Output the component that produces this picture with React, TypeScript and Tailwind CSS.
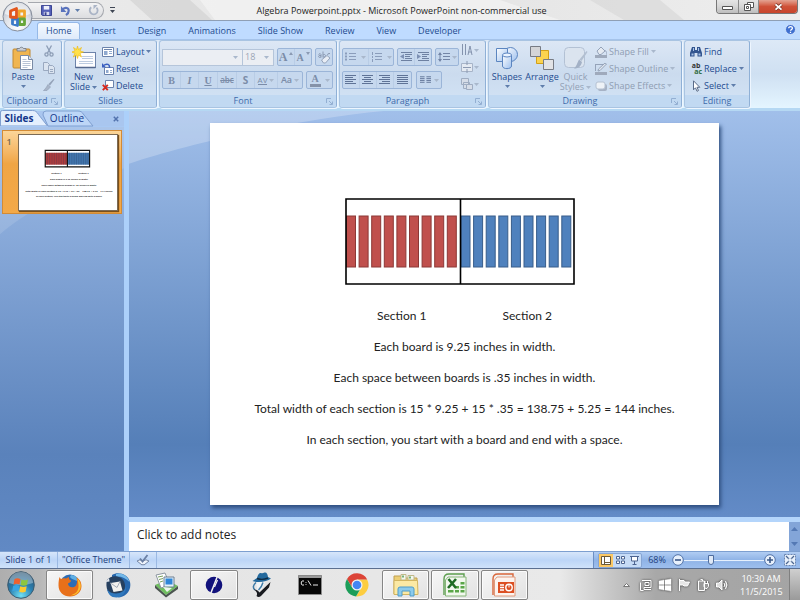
import type { ReactNode } from "react";
import clsx from "clsx";

const RIBBON_TABS = ["Home", "Insert", "Design", "Animations", "Slide Show", "Review", "View", "Developer"];

const SLIDE_LINES = [
  "Each board is 9.25 inches in width.",
  "Each space between boards is .35 inches in width.",
  "Total width of each section is 15 * 9.25 + 15 * .35 = 138.75 + 5.25 = 144 inches.",
  "In each section, you start with a board and end with a space.",
];

const BOARDS = [0, 1, 2, 3, 4, 5, 6, 7, 8];

function Caret({ muted }: { muted?: boolean }) {
  return (
    <svg viewBox="0 0 5 3" className={clsx("h-[3px] w-[5px] shrink-0", muted ? "fill-[#a9b8cc]" : "fill-[#5f7dab]")}>
      <path d="M0 0h5L2.5 3z" />
    </svg>
  );
}

/* ---------- title bar ---------- */

function OfficeOrb() {
  return (
    <button aria-label="Office Button" className="absolute top-[1px] left-[2px] z-10 size-[31px]">
      <svg viewBox="0 0 31 31" className="size-full">
        <defs>
          <radialGradient id="orb" cx=".5" cy=".85" r=".8">
            <stop offset="0" stopColor="#fff" />
            <stop offset=".55" stopColor="#dfe2e8" />
            <stop offset="1" stopColor="#b4bac6" />
          </radialGradient>
        </defs>
        <circle cx="15.500" cy="15.500" r="14.500" fill="url(#orb)" stroke="#858d9b" />
        <path d="M3 13a12.500 11.500 0 0 1 25 0c-7 3-18 3-25 0z" fill="#fff" opacity=".6" />
        <g fill="none" strokeWidth="2.800" strokeLinejoin="round">
          <path d="M17 10h5.500v6H17z" stroke="#f0a52c" />
          <path d="M17.500 18h5v5.500h-5z" stroke="#67a63a" />
          <path d="M10.500 18h5v6.500l-5-1.500z" stroke="#3c7bc8" />
          <path d="M8.500 10 14.500 7.500v9l-6-.5z" stroke="#e2571e" />
        </g>
      </svg>
    </button>
  );
}

function TitleBar() {
  return (
    <header className="relative flex h-5 shrink-0 items-center bg-linear-to-r from-[#ececec] via-[#e3e3e3] to-[#eeeeee]">
      <svg viewBox="0 0 800 20" preserveAspectRatio="none" className="absolute inset-0 size-full">
        <path d="M130 0h60l22 20h-60z" fill="#d3d3d3" opacity=".7" />
        <path d="M200 0h300l60 20H215z" fill="#f3f3f3" opacity=".8" />
        <path d="M590 0h70l24 20h-60z" fill="#d9d9d9" opacity=".7" />
      </svg>
      <div className="relative ml-[28px] flex h-[17px] w-[76px] items-center gap-2 rounded-r-full border border-l-0 border-[#a5a8ae] bg-linear-to-b from-[#f4f4f5] to-[#dcdde0] pl-[13px]">
        <button aria-label="Save">
          <svg viewBox="0 0 12 12" className="size-[11px]">
            <path d="M.5.5h11v11h-10l-1-1z" fill="#5560b8" stroke="#303a8c" />
            <path d="M3 1h6v4H3z" fill="#eef0fb" />
            <path d="M3 7.500h6V11H3z" fill="#d7daf0" />
            <path d="M4 8h2v3H4z" fill="#39428f" />
          </svg>
        </button>
        <button aria-label="Undo" className="flex items-center gap-1">
          <svg viewBox="0 0 12 12" className="size-[11px]">
            <path d="M3 4.500C6 2 9.500 3 9.500 6.200 9.500 8.500 8 10 6.500 11" fill="none" stroke="#5a73bd" strokeWidth="2.400" />
            <path d="M1 1v6.500h6z" fill="#5a73bd" />
          </svg>
          <Caret />
        </button>
        <button aria-label="Repeat" disabled>
          <svg viewBox="0 0 12 12" className="size-[11px]">
            <path d="M3.500 2.500C1 4.500 1.500 8 4 9.500s6.500.5 6.500-3.500c0-1.200-.5-2.500-1.300-3.200" fill="none" stroke="#aab4c6" strokeWidth="2" />
            <path d="M6 4.500V0H10.500z" fill="#aab4c6" />
          </svg>
        </button>
      </div>
      <button aria-label="Customize Quick Access Toolbar" className="relative ml-[6px]">
        <svg viewBox="0 0 5 6" className="h-[6px] w-[5px] fill-[#3f4654]">
          <path d="M0 0h5v1H0zM0 3h5L2.500 6z" />
        </svg>
      </button>
      <h1 className="relative flex-1 pt-[1px] pr-[28px] text-center text-[9px] leading-5 text-[#1c1c1c]">
        Algebra Powerpoint.pptx - Microsoft PowerPoint non-commercial use
      </h1>
      <div className="relative mr-[2px] flex h-[14px] self-start overflow-hidden rounded-b-[4px] border border-t-0 border-[#777]">
        <button aria-label="Minimize" className="flex w-[22px] items-center justify-center border-r border-[#8b8b8b] bg-linear-to-b from-[#e6e6e6] via-[#d6d6d6] to-[#bdbdbd]">
          <svg viewBox="0 0 11 4" className="mt-[2px] h-[4px] w-[11px]">
            <path d="M.5.5h10v3H.5z" fill="#fff" stroke="#555" />
          </svg>
        </button>
        <button aria-label="Restore Down" className="flex w-[20px] items-center justify-center border-r border-[#8b8b8b] bg-linear-to-b from-[#e6e6e6] via-[#d6d6d6] to-[#bdbdbd]">
          <svg viewBox="0 0 10 9" className="h-[9px] w-[10px]" fill="#fff" stroke="#555">
            <path d="M3.500.5h6v5h-6z" />
            <path d="M.5 2.500h6v6h-6z" />
            <path d="M2.500 4.500h2v2h-2z" />
          </svg>
        </button>
        <button aria-label="Close" className="flex w-[38px] items-center justify-center bg-linear-to-b from-[#e3a392] via-[#cf5138] to-[#c8452c]">
          <svg viewBox="0 0 9 8" className="h-[8px] w-[9px]">
            <path d="M1.500 1.300 7.500 6.700M7.500 1.300 1.500 6.700" stroke="#7c3528" strokeWidth="3.200" />
            <path d="M1.500 1.300 7.500 6.700M7.500 1.300 1.500 6.700" stroke="#fff" strokeWidth="1.800" />
          </svg>
        </button>
      </div>
    </header>
  );
}

function TabRow() {
  return (
    <nav className="flex h-[19px] shrink-0 items-end border-t border-[#8f9fb5] bg-[#bfdbff] pl-[37px]">
      {RIBBON_TABS.map((tab, i) => (
        <button
          key={tab}
          className={clsx(
            "h-[17px] text-[9px] leading-[16px] text-[#1e4b8f]",
            i === 0 ? "rounded-t-[3px] border border-b-0 border-[#95b9e8] bg-linear-to-b from-[#f5faff] to-[#dfeafa] px-[8px]" : "px-[11px]",
          )}
        >
          {tab}
        </button>
      ))}
      <button aria-label="Help" className="mr-[4px] mb-[4px] ml-auto">
        <svg viewBox="0 0 11 11" className="size-[11px]">
          <circle cx="5.500" cy="5.500" r="5" fill="#3f6fd0" stroke="#cfe0f8" />
          <path d="M3.700 4.300c0-2.300 3.700-2.300 3.700 0 0 1.300-1.800 1.200-1.800 2.500M5.500 7.800v1.200" fill="none" stroke="#fff" strokeWidth="1.300" />
        </svg>
      </button>
    </nav>
  );
}

/* ---------- ribbon ---------- */

function Group({
  label,
  width,
  launcher,
  children,
}: {
  label: string;
  width: string;
  launcher?: boolean;
  children: ReactNode;
}) {
  return (
    <section
      className={clsx(
        "flex h-[68px] shrink-0 flex-col overflow-hidden rounded-[3px] border border-[#a9c4e2] border-r-[#8fb0d6] bg-linear-to-b from-[#dce7f5] via-[#cbdbee] to-[#d3e4f6] shadow-[1px_1px_0_#eef6ff]",
        width,
      )}
    >
      <div className="flex min-h-0 flex-1">{children}</div>
      <div className="flex h-[12px] items-center bg-[#c1d9f2] text-[#3e6aaa]">
        <h2 className="flex-1 text-center text-[9px] leading-[12px] whitespace-nowrap">{label}</h2>
        {launcher && (
          <button aria-label={`${label} dialog`} className="pr-[3px]">
            <svg viewBox="0 0 7 7" className="size-[7px]" fill="none" stroke="#93afd2">
              <path d="M.5 5V.5H5M3 3l3 3M6.500 3.500v3h-3" />
            </svg>
          </button>
        )}
      </div>
    </section>
  );
}

function BigButton({
  icon,
  lines,
  muted,
  inline,
  width,
}: {
  icon: ReactNode;
  lines: string[];
  muted?: boolean;
  inline?: boolean;
  width: string;
}) {
  return (
    <button
      disabled={muted}
      className={clsx(
        "flex flex-col items-center pt-[3px] text-[9px] leading-[10px]",
        muted ? "text-[#93a1b5]" : "text-[#1e4b8f]",
        width,
      )}
    >
      <span className="flex h-[28px] items-center">{icon}</span>
      {lines.map((line, i) => (
        <span key={line} className="flex items-center gap-[2px] whitespace-nowrap">
          {line}
          {inline && i === lines.length - 1 && <Caret muted={muted} />}
        </span>
      ))}
      {!inline && (
        <span className="pt-[3px]">
          <Caret muted={muted} />
        </span>
      )}
    </button>
  );
}

function SmallButton({ icon, label, caret, muted }: { icon: ReactNode; label: string; caret?: boolean; muted?: boolean }) {
  return (
    <button
      disabled={muted}
      className={clsx("flex h-[17px] items-center gap-[2px] text-[9px] whitespace-nowrap", muted ? "text-[#8f9db2]" : "text-[#1e4b8f]")}
    >
      {icon}
      <span>{label}</span>
      {caret && <Caret muted={muted} />}
    </button>
  );
}

const box = "flex h-[18px] items-center rounded-[2px] border border-[#9bb5d8] bg-[#c6d8ee]";
const cell = "flex h-full items-center justify-center gap-[2px] border-r border-[#b9cde6] last:border-r-0";

function ClipboardGroup() {
  return (
    <Group label="Clipboard" width="w-[60px]" launcher>
      <BigButton
        width="w-[40px]"
        lines={["Paste"]}
        icon={
          <svg viewBox="0 0 22 24" className="h-[24px] w-[22px]">
            <rect x="1" y="3" width="17" height="19" rx="1" fill="#f0b550" stroke="#c08a35" />
            <path d="M5 5V2.500h2.500a2.200 2.200 0 0 1 4 0H14V5z" fill="#c8ccd4" stroke="#6f7784" strokeWidth=".8" />
            <path d="M8.500 9.500h8l4 4v10h-12z" fill="#fff" stroke="#7a8aa5" />
            <path d="M16.500 9.500v4h4" fill="#dbe6f5" stroke="#7a8aa5" />
            <path d="M10.500 13.500h4M10.500 15.500h8M10.500 17.500h8M10.500 19.500h8M10.500 21.500h5" stroke="#b8c3d5" />
          </svg>
        }
      />
      <div className="flex flex-col items-center gap-[5px] pt-[4px]">
        <button aria-label="Cut" disabled>
          <svg viewBox="0 0 10 12" className="h-[12px] w-[10px]" fill="none" stroke="#8c9cb5" strokeWidth="1.300">
            <path d="M2.500.5 6.500 8M7.500.5 3.500 8" />
            <circle cx="2.500" cy="9.500" r="1.600" />
            <circle cx="7.500" cy="9.500" r="1.600" />
          </svg>
        </button>
        <button aria-label="Copy" disabled>
          <svg viewBox="0 0 12 12" className="size-[12px]" fill="#dbe4f0" stroke="#9aa9c0">
            <path d="M.5.500h4l2 2v6h-6z" />
            <path d="M5.500 3.500h4l2 2v6h-6z" />
            <path d="M7 7.500h3M7 9.500h3" />
          </svg>
        </button>
        <button aria-label="Format Painter" disabled>
          <svg viewBox="0 0 12 12" className="size-[12px]">
            <path d="M11.500.5 7 6.500 5.500 5l5-5z" fill="#94a2b8" />
            <path d="M5 5.500 7.500 8 4 11.500H.5C2.500 10 3.500 8 5 5.500z" fill="#a9b5c8" stroke="#94a2b8" strokeWidth=".7" />
          </svg>
        </button>
      </div>
    </Group>
  );
}

function SlidesGroup() {
  return (
    <Group label="Slides" width="w-[93px]">
      <BigButton
        width="w-[37px]"
        inline
        lines={["New", "Slide"]}
        icon={
          <svg viewBox="0 0 24 24" className="size-[24px]">
            <rect x="3.500" y="6.500" width="20" height="15" fill="#fdfdff" stroke="#6d83aa" />
            <path d="M3.500 21.500h20" stroke="#54688e" strokeWidth="1.500" />
            <path d="M10 10.500h11M10 12.500h11M7 15.500h14M7 17.500h14" stroke="#bccbe0" />
            <path d="m5.500 0 1 3.500L9.500 1.500 8 5l3.500 1L8 7.200 9.500 11 6.500 9l-1 3.500-1-3.500-3.200 2L3 7.200-.500 6 3 5 1.500 1.500l3 2z" fill="#ffe04a" stroke="#eeb80c" strokeWidth=".6" />
          </svg>
        }
      />
      <div className="flex flex-col pt-[2px]">
        <SmallButton
          label="Layout"
          caret
          icon={
            <svg viewBox="0 0 12 10" className="h-[10px] w-[12px]">
              <path d="M.5.500h11v9H.5z" fill="#fff" stroke="#6b83ac" />
              <path d="M2 2.500h8" stroke="#6b83ac" />
              <path d="M2 4h3.500v4H2z" fill="#8fa9cf" />
              <path d="M7 4.500h3M7 6.500h3" stroke="#8fa9cf" />
            </svg>
          }
        />
        <SmallButton
          label="Reset"
          icon={
            <svg viewBox="0 0 12 12" className="size-[12px]">
              <path d="M2.500 4.500h9v7h-9z" fill="#fff" stroke="#6b83ac" />
              <path d="M4 7h2.500v3H4z" fill="#8fa9cf" />
              <path d="M8 7.500h2M8 9.500h2" stroke="#8fa9cf" />
              <path d="M1.500 2.500C5-.2 8 1.500 7.500 5" fill="none" stroke="#3b5fc0" strokeWidth="1.500" />
              <path d="M0 0v4.500h4z" fill="#3b5fc0" />
            </svg>
          }
        />
        <SmallButton
          label="Delete"
          icon={
            <svg viewBox="0 0 12 11" className="h-[11px] w-[12px]">
              <path d="M3.500.5h8v7h-8z" fill="#fff" stroke="#6b83ac" />
              <path d="m.8 4.800 5 5.400m0-5.400-5 5.400" stroke="#d5281e" strokeWidth="1.900" />
            </svg>
          }
        />
      </div>
    </Group>
  );
}

function FontGroup() {
  return (
    <Group label="Font" width="w-[178px]" launcher>
      <div className="flex flex-col gap-[5px] pt-[7px] pl-[2px] text-[#7b8ca8]">
        <div className="flex h-[18px] items-center gap-[3px]">
          <div className="flex h-[17px] border border-[#b5c5da] bg-[#ebeef3] text-[9px]">
            <label className="flex w-[80px] items-center border-r border-[#b5c5da] pr-[4px]">
              <select aria-label="Font" disabled className="min-w-0 flex-1 appearance-none opacity-100">
                <option></option>
              </select>
              <Caret muted />
            </label>
            <label className="flex w-[30px] items-center pr-[4px] pl-[2px]">
              <select aria-label="Font size" disabled className="min-w-0 flex-1 appearance-none text-[#9ba5b5] opacity-100">
                <option>18</option>
              </select>
              <Caret muted />
            </label>
          </div>
          <div className={box}>
            <button aria-label="Grow Font" disabled className={clsx(cell, "w-[17px] gap-[1px] font-['Liberation_Serif'] text-[12px] font-bold")}>
              A
              <svg viewBox="0 0 4 3" className="mt-[3px] h-[3px] w-[4px] self-start fill-[#8b9ab3]"><path d="M0 3h4L2 0z" /></svg>
            </button>
            <button aria-label="Shrink Font" disabled className={clsx(cell, "w-[16px] gap-[1px] font-['Liberation_Serif'] text-[10px] font-bold")}>
              A
              <svg viewBox="0 0 4 3" className="mt-[3px] h-[3px] w-[4px] self-start fill-[#8b9ab3]"><path d="M0 0h4L2 3z" /></svg>
            </button>
          </div>
          <div className={box}>
            <button aria-label="Clear Formatting" disabled className="px-[1px]">
              <svg viewBox="0 0 14 14" className="size-[14px]">
                <path d="M1.500 4.500q2-2 2.500 0v3m0-2q-2.500-.5-2.500 1T4 7M6 1.500v6m0-2.500q2-1.500 2.500.5T6 7M13 3.500q-2.500-.5-2.500 1.500" fill="none" stroke="#8b9ab3" />
                <path d="m4.500 10 5.500-4.500 3 2.500-4.500 5H6.500z" fill="#e8edf5" stroke="#94a3ba" />
              </svg>
            </button>
          </div>
        </div>
        <div className="flex items-center gap-[3px]">
          <div className={box}>
            <button aria-label="Bold" disabled className={clsx(cell, "w-[18px] font-['Liberation_Serif'] text-[10px] font-bold")}>B</button>
            <button aria-label="Italic" disabled className={clsx(cell, "w-[18px] font-['Liberation_Serif'] text-[10px] font-bold italic")}>I</button>
            <button aria-label="Underline" disabled className={clsx(cell, "w-[19px] font-['Liberation_Serif'] text-[10px] font-bold underline")}>U</button>
            <button aria-label="Strikethrough" disabled className={clsx(cell, "w-[19px] text-[8px] font-semibold line-through")}>abc</button>
            <button aria-label="Shadow" disabled className={clsx(cell, "w-[18px] text-[10px] font-bold")}>S</button>
            <button aria-label="Character Spacing" disabled className={clsx(cell, "w-[23px] text-[8px]")}>
              <span className="border-b border-[#7b8ca8] leading-[9px]">AV</span>
              <Caret muted />
            </button>
            <button aria-label="Change Case" disabled className={clsx(cell, "w-[24px] text-[9px] font-semibold")}>
              Aa
              <Caret muted />
            </button>
          </div>
          <div className={box}>
            <button aria-label="Font Color" disabled className={clsx(cell, "w-[25px] gap-[4px] text-[10px] font-bold")}>
              <span className="w-[11px] border-b-[3px] border-[#8592a8] font-['Liberation_Serif'] leading-[10px]">A</span>
              <Caret muted />
            </button>
          </div>
        </div>
      </div>
    </Group>
  );
}

function Lines({ rows, bullets, className }: { rows: [number, number][]; bullets?: boolean; className?: string }) {
  return (
    <svg viewBox="0 0 12 10" className={clsx("h-[10px] w-[12px]", className ?? "stroke-[#5f7396]")}>
      {rows.map(([from, to], i) => (
        <path key={i} d={`M${from} ${rows.length === 5 ? 0.5 + i * 2 : 1.5 + i * 3}H${to}`} />
      ))}
      {bullets && <path d="M0 1.500h2M0 4.500h2M0 7.500h2" strokeWidth="2" />}
    </svg>
  );
}

const BULLET_ROWS: [number, number][] = [[4, 11], [4, 11], [4, 11]];
const ALIGN_ROWS: { name: string; rows: [number, number][] }[] = [
  { name: "Align Left", rows: [[0, 11], [0, 8], [0, 11], [0, 8], [0, 11]] },
  { name: "Center", rows: [[0, 11], [2, 9], [0, 11], [2, 9], [0, 11]] },
  { name: "Align Right", rows: [[0, 11], [3, 11], [0, 11], [3, 11], [0, 11]] },
  { name: "Justify", rows: [[0, 11], [0, 11], [0, 11], [0, 11], [0, 11]] },
];

function IndentIcon({ right }: { right?: boolean }) {
  return (
    <svg viewBox="0 0 12 10" className="h-[10px] w-[12px]">
      <path d="M1 .5h11M5 2.500h7M5 4.500h5M5 6.500h7M1 8.500h11" stroke="#6e81a2" />
      <path d={right ? "M0 2v5l4-2.500z" : "M4 2v5L0 4.500z"} fill="#7d91b4" />
    </svg>
  );
}

function ParagraphGroup() {
  return (
    <Group label="Paragraph" width="w-[147px]" launcher>
      <div className="flex flex-col gap-[5px] pt-[7px] pl-[2px]">
        <div className="flex gap-[3px]">
          <div className={box}>
            <button aria-label="Bullets" disabled className={clsx(cell, "w-[26px] gap-[4px]")}>
              <Lines rows={BULLET_ROWS} bullets className="stroke-[#8b9dbb]" />
              <Caret muted />
            </button>
            <button aria-label="Numbering" disabled className={clsx(cell, "w-[24px] gap-[4px]")}>
              <svg viewBox="0 0 12 10" className="h-[10px] w-[12px] stroke-[#8b9dbb]">
                <path d="M4 1.500h7M4 4.500h7M4 7.500h7M1.500 0v3M1.500 4v2M1.500 7v3" />
              </svg>
              <Caret muted />
            </button>
          </div>
          <div className={box}>
            <button aria-label="Decrease Indent" disabled className={clsx(cell, "w-[17px]")}>
              <IndentIcon />
            </button>
            <button aria-label="Increase Indent" disabled className={clsx(cell, "w-[16px]")}>
              <IndentIcon right />
            </button>
          </div>
          <div className={box}>
            <button aria-label="Line Spacing" disabled className={clsx(cell, "w-[22px]")}>
              <svg viewBox="0 0 12 10" className="h-[10px] w-[12px]">
                <path d="M5 1.500h7M5 4.500h7M5 7.500h7M2 1.500v7" stroke="#7385a6" />
                <path d="M0 3 2 0l2 3zM0 7l2 3 2-3z" fill="#7385a6" />
              </svg>
              <Caret muted />
            </button>
          </div>
        </div>
        <div className="flex gap-[4px]">
          <div className={box}>
            {ALIGN_ROWS.map(({ name, rows }) => (
              <button key={name} aria-label={name} disabled className={clsx(cell, "w-[17px]")}>
                <Lines rows={rows} />
              </button>
            ))}
          </div>
          <div className={box}>
            <button aria-label="Columns" disabled className={clsx(cell, "w-[24px] gap-[3px]")}>
              <svg viewBox="0 0 12 10" className="h-[10px] w-[11px] stroke-[#5f7396]">
                <path d="M0 1.500h5M7 1.500h5M0 3.500h5M7 3.500h5M0 5.500h5M7 5.500h5M0 7.500h5M7 7.500h5" />
              </svg>
              <Caret muted />
            </button>
          </div>
        </div>
      </div>
      <div className="flex flex-col gap-[5px] pt-[3px] pl-[2px]">
        <button aria-label="Text Direction" disabled className="flex items-center gap-[1px]">
          <svg viewBox="0 0 12 12" className="size-[12px]" fill="none" stroke="#8493ad">
            <path d="M1.500 0v11M4.500 0v11M7 11l2-9 2 9M7.500 8h3" />
          </svg>
          <Caret muted />
        </button>
        <button aria-label="Align Text" disabled className="flex items-center gap-[1px]">
          <svg viewBox="0 0 12 12" className="size-[12px]">
            <path d="M.5 2.500h11v8H.5z" fill="#e4eaf2" stroke="#a7b4c8" />
            <path d="M6 0v4M6 8v4M2 6.500h8" stroke="#8c9ab2" />
          </svg>
          <Caret muted />
        </button>
        <button aria-label="Convert to SmartArt" disabled className="flex items-center gap-[1px]">
          <svg viewBox="0 0 12 12" className="size-[12px]" fill="#d6dde8" stroke="#9fadc2">
            <path d="M.5.500h7v6h-7zM2.500 4.500h6v6h-6z" />
            <path d="M5.500 6.500h6v5h-6z" />
          </svg>
          <Caret muted />
        </button>
      </div>
    </Group>
  );
}

function DrawingGroup() {
  return (
    <Group label="Drawing" width="w-[194px]" launcher>
      <BigButton
        width="w-[36px]"
        lines={["Shapes"]}
        icon={
          <svg viewBox="0 0 24 24" className="size-[24px]">
            <defs>
              <linearGradient id="shape" x2="1" y2="1">
                <stop offset="0" stopColor="#fff" />
                <stop offset="1" stopColor="#9dc0ee" />
              </linearGradient>
            </defs>
            <circle cx="15.500" cy="8.500" r="7" fill="url(#shape)" stroke="#5b85c0" />
            <path d="M1.500 2.500h11v13h-11z" fill="url(#shape)" stroke="#5b85c0" />
            <path d="M7.500 9v11c0 3.500 9 3.500 9 0V9z" fill="url(#shape)" stroke="#5b85c0" />
            <ellipse cx="12" cy="9" rx="4.500" ry="2" fill="#eaf3ff" stroke="#5b85c0" />
          </svg>
        }
      />
      <BigButton
        width="w-[34px]"
        lines={["Arrange"]}
        icon={
          <svg viewBox="0 0 24 24" className="size-[24px]">
            <path d="M6.500 4.500h12v13h-12z" fill="#fbd34f" stroke="#d3a017" />
            <path d="M.5.500h10v10H.5z" fill="#d4d5d8" stroke="#777b84" />
            <path d="M13.500 13.500h10v10h-10z" fill="#e2e3e6" stroke="#777b84" />
          </svg>
        }
      />
      <BigButton
        width="w-[33px]"
        muted
        inline
        lines={["Quick", "Styles"]}
        icon={
          <svg viewBox="0 0 24 24" className="size-[24px]">
            <rect x=".5" y="1.500" width="20" height="20" rx="4" fill="#dbe4ef" stroke="#b3c1d4" />
            <path d="m23.500 6-6 9-2-1.500 7-8.500z" fill="#b2bfd1" />
            <path d="M15 13.500 18 16c-1 4-3 6.500-8 6.500 2.500-2 3-5 5-9z" fill="#a3b1c6" />
          </svg>
        }
      />
      <div className="flex flex-col pt-[2px] pl-[3px]">
        <SmallButton
          muted
          caret
          label="Shape Fill"
          icon={
            <svg viewBox="0 0 12 12" className="size-[12px]">
              <path d="m2 5 4-4 4 4-4 3.500H4z" fill="#e5eaf1" stroke="#95a3b9" />
              <path d="M10 4.500c2 1 2 3 1.500 4" fill="none" stroke="#95a3b9" />
              <path d="M0 9h12v3H0z" fill="#9faabc" />
            </svg>
          }
        />
        <SmallButton
          muted
          caret
          label="Shape Outline"
          icon={
            <svg viewBox="0 0 12 12" className="size-[12px]">
              <path d="M.5 1.500h8M.5 1v7M11.500 1 5 7.500l-2 .500.500-2L10 0z" fill="#e0e6ee" stroke="#95a3b9" />
              <path d="M0 9h12v3H0z" fill="#9faabc" />
            </svg>
          }
        />
        <SmallButton
          muted
          caret
          label="Shape Effects"
          icon={
            <svg viewBox="0 0 12 12" className="size-[12px]">
              <rect x="3" y="4" width="9" height="7" rx="2" fill="#a6b2c5" />
              <rect x="1" y="2" width="9" height="7" rx="2" fill="#eef2f7" stroke="#b5c1d2" />
            </svg>
          }
        />
      </div>
    </Group>
  );
}

function EditingGroup() {
  return (
    <Group label="Editing" width="w-[66px]">
      <div className="flex flex-col pt-[2px] pl-[5px]">
        <SmallButton
          label="Find"
          icon={
            <svg viewBox="0 0 12 11" className="h-[11px] w-[12px]" fill="#33558f">
              <path d="M2 1h3v3h2V1h3l2 6v3.500H7.500V7h-3v3.500H0V7z" />
              <path d="M1.500 7.500h2v2h-2zM8.500 7.500h2v2h-2zM3 2h1v3H3zM8 2h1v3H8z" fill="#a9c3e8" />
            </svg>
          }
        />
        <SmallButton
          label="Replace"
          caret
          icon={
            <span className="flex w-[12px] flex-col text-[7px] leading-[6px] font-bold text-[#333]">
              <span>ab</span>
              <span className="self-end text-[#2f6b3c]">ac</span>
            </span>
          }
        />
        <SmallButton
          label="Select"
          caret
          icon={
            <svg viewBox="0 0 12 12" className="size-[12px]">
              <path d="M3.500.8v9l2-2 1.500 3.500 1.500-.8L7 7.300h2.800z" fill="#fff" stroke="#5a6b88" />
            </svg>
          }
        />
      </div>
    </Group>
  );
}

/* ---------- work area ---------- */

function Backdrop({ wide }: { wide?: boolean }) {
  return (
    <svg viewBox="0 0 100 100" preserveAspectRatio="none" className="absolute inset-0 -z-10 size-full">
      <path
        d={wide ? "M0 0H38C25 2 9 8 0 13z" : "M0 0h100v13C62 17 25 22 0 28z"}
        fill="#fff"
        opacity={wide ? 0.24 : 0.12}
      />
    </svg>
  );
}

function SlidePanel() {
  return (
    <aside className="relative isolate w-[124px] shrink-0 bg-linear-to-b from-[#a3c0ea] via-[#5a82bb] via-78% to-[#6189c4]">
      <Backdrop />
      <div className="flex h-[16px] items-end border-b border-[#a9c9f3] bg-[#a9c6ef] text-[10px] leading-[15px] text-[#15388c]">
        <button className="relative isolate z-10 h-[16px] w-[48px] pr-[10px] font-bold">
          <svg viewBox="0 0 48 16" className="absolute inset-0 -z-10 size-full">
            <path d="M.5 16V2q0-1.500 2-1.500h30c3 0 4 1 6 4L47.500 16z" fill="#e4effd" stroke="#7f9fd0" />
          </svg>
          Slides
        </button>
        <button className="relative isolate h-[16px] w-[47px] pr-[9px]">
          <svg viewBox="0 0 47 16" className="absolute inset-0 -z-10 size-full overflow-visible">
            <path d="M0 16-5 5q-.5-4 3-4h32c3 0 4 1 6 4l9 11z" fill="#bdd6f7" stroke="#7f9fd0" />
          </svg>
          Outline
        </button>
        <button aria-label="Close pane" className="mr-[5px] mb-[4px] ml-auto">
          <svg viewBox="0 0 6 6" className="size-[6px]">
            <path d="m.8.800 4.400 4.400m0-4.400L.8 5.200" stroke="#5272ad" strokeWidth="1.500" />
          </svg>
        </button>
      </div>
      <button
        aria-label="Slide 1"
        className="mx-[2px] mt-[3px] flex w-[120px] gap-[5px] border border-[#d38b35] bg-linear-to-b from-[#fbd699] via-[#f0a544] via-40% to-[#f3a948] p-[3px] pb-[2px] pl-[2px] text-[9px]"
      >
        <span className="w-[8px] pt-[2px] text-center leading-[12px] font-semibold text-[#77664c]">1</span>
        <svg viewBox="0 0 508 388" className="min-w-0 flex-1 border border-[#7c6b55] bg-white shadow-[1px_1px_1px_#7a4f1a]">
          <path d="M136 92h115v62H136z" fill="#b03c3c" />
          <path d="M251 92h115v62H251z" fill="#4377ae" />
          {BOARDS.map((n) => (
            <path key={n} d={`M${147 + n * 12} 92v62M${262 + n * 12} 92v62`} stroke="#27385e" strokeWidth="3" opacity=".5" />
          ))}
          <path d="M136 80h230v85H136zM251 80v85" fill="none" stroke="#111" strokeWidth="6" />
          <g fontFamily="Lato, sans-serif" fontSize="13" fontWeight="700" fill="#222" textAnchor="middle">
            <text x="194" y="200">Section 1</text>
            <text x="334" y="200">Section 2</text>
            {SLIDE_LINES.map((line, i) => (
              <text key={line} x="260" y={231 + i * 31}>{line}</text>
            ))}
          </g>
        </svg>
      </button>
    </aside>
  );
}

function BoardDrawing() {
  return (
    <svg viewBox="0 0 230 87" className="w-[230px] self-center" role="img" aria-label="Two fence sections">
      {BOARDS.map((n) => (
        <g key={n}>
          <rect x={1.5 + n * 12.6} y="18" width="9" height="51" fill="#c0504d" stroke="#8c3836" />
          <rect x={116 + n * 12.6} y="18" width="9" height="51" fill="#4f81bd" stroke="#385d8a" />
        </g>
      ))}
      <path d="M1 1h228v85H1zM115.500 1v85" fill="none" stroke="#000" strokeWidth="1.600" />
    </svg>
  );
}

function Workspace() {
  return (
    <main className="flex min-w-0 flex-1 flex-col border-l-[5px] border-[#acd0fa]">
      <div className="relative isolate flex min-h-0 flex-1 items-center justify-center bg-linear-to-b from-[#a1bfea] via-[#557fb8] via-82% to-[#638bc7]">
        <Backdrop wide />
        <article className="flex aspect-4/3 w-[76%] flex-col bg-white pt-[75px] text-center font-['Lato',sans-serif] text-[12px] leading-[31px] text-[#222] shadow-[2px_3px_4px_#2f4f80]">
          <div className="mr-[9px] flex justify-center">
            <BoardDrawing />
          </div>
          <div className="mt-[15px] flex justify-center gap-[76px]">
            <p>Section 1</p>
            <p>Section 2</p>
          </div>
          {SLIDE_LINES.map((line) => (
            <p key={line}>{line}</p>
          ))}
        </article>
      </div>
      <div className="flex h-[34px] shrink-0 border-t-[5px] border-[#b4d5fb] bg-white">
        <textarea
          aria-label="Notes"
          placeholder="Click to add notes"
          className="h-full flex-1 resize-none overflow-hidden px-[8px] pt-[4px] text-[12px] leading-[18px] placeholder:text-[#222]"
        />
        <div className="flex w-[11px] flex-col items-center justify-between bg-[#83a5d8] py-[5px]">
          <button aria-label="Scroll up">
            <svg viewBox="0 0 7 4" className="h-[4px] w-[7px] fill-[#5479b4]"><path d="M0 4h7L3.500 0z" /></svg>
          </button>
          <button aria-label="Scroll down">
            <svg viewBox="0 0 7 4" className="h-[4px] w-[7px] fill-[#5479b4]"><path d="M0 0h7L3.500 4z" /></svg>
          </button>
        </div>
      </div>
    </main>
  );
}

/* ---------- status bar ---------- */

function ZoomStep({ label, plus }: { label: string; plus?: boolean }) {
  return (
    <button aria-label={label}>
      <svg viewBox="0 0 12 12" className="size-[12px]">
        <circle cx="6" cy="6" r="5.300" fill="#e7f0fc" stroke="#5474a8" />
        <path d={plus ? "M3 6h6M6 3v6" : "M3 6h6"} stroke="#3b5888" strokeWidth="1.600" />
      </svg>
    </button>
  );
}

function StatusBar() {
  return (
    <div className="flex h-[18px] shrink-0 border-t border-b border-t-[#7d9fd0] border-b-[#5b6f90] bg-linear-to-b from-[#d7e6fa] via-[#bcd5f7] to-[#cfe2fa] text-[9px] leading-[16px] text-[#1e3f7c]">
      <span className="w-[58px] border-r border-[#9bb9e3] text-center whitespace-nowrap">Slide 1 of 1</span>
      <span className="w-[72px] border-r border-[#9bb9e3] text-center whitespace-nowrap">"Office Theme"</span>
      <button aria-label="Spelling" className="flex w-[27px] items-center justify-center border-r border-[#9bb9e3]">
        <svg viewBox="0 0 14 12" className="h-[12px] w-[14px]">
          <path d="M1 7q3-2.500 6 0 3-2.500 6 0l-5 4-1-.5-1 .5z" fill="#eef3fa" stroke="#7487a6" />
          <path d="m4 4.500 2.500 3L11.500 1" fill="none" stroke="#6a7fa3" strokeWidth="1.800" />
        </svg>
      </button>
      <div className="ml-auto flex items-center border-l border-[#6d8fc4] bg-linear-to-b from-[#b1cdf3] via-[#8fb3e6] to-[#9dbfee] pr-[4px] pl-[4px]">
        <div className="flex h-[15px] rounded-[2px] border border-[#86a5d3] bg-[#c6dbf6]">
          <button aria-label="Normal view" className="flex w-[14px] items-center justify-center bg-[#fbc865]">
            <svg viewBox="0 0 10 9" className="h-[9px] w-[10px]" fill="#fff" stroke="#6b5a3a">
              <path d="M.5.500h9v8h-9zM3.500.500v8M3.500 6.500h6" />
            </svg>
          </button>
          <button aria-label="Slide Sorter" className="flex w-[14px] items-center justify-center">
            <svg viewBox="0 0 9 8" className="h-[8px] w-[9px]" fill="#fff" stroke="#4d6490">
              <path d="M.5.500h3v2.500h-3zM5.500.500h3v2.500h-3zM.5 5h3v2.500h-3zM5.500 5h3v2.500h-3z" />
            </svg>
          </button>
          <button aria-label="Slide Show view" className="flex w-[14px] items-center justify-center">
            <svg viewBox="0 0 9 9" className="size-[9px]" fill="#fff" stroke="#4d6490">
              <path d="M0 .5h9M1.500.500h6v4.500h-6zM4.500 5v3M2.500 8.500h4" />
            </svg>
          </button>
        </div>
        <button className="w-[30px] text-center">68%</button>
        <ZoomStep label="Zoom out" />
        <input
          type="range"
          aria-label="Zoom"
          min={0}
          max={100}
          defaultValue={33}
          className="h-[13px] w-[80px] appearance-none bg-linear-to-b from-transparent from-45% via-[#e6f0fd] via-50% to-transparent to-58% [&::-webkit-slider-thumb]:h-[10px] [&::-webkit-slider-thumb]:w-[6px] [&::-webkit-slider-thumb]:appearance-none [&::-webkit-slider-thumb]:rounded-b-[3px] [&::-webkit-slider-thumb]:border [&::-webkit-slider-thumb]:border-[#4f6d9e] [&::-webkit-slider-thumb]:bg-[#dfe9f7]"
        />
        <ZoomStep label="Zoom in" plus />
        <button aria-label="Fit to window" className="ml-[8px]">
          <svg viewBox="0 0 12 12" className="size-[12px]">
            <path d="M.5.500h11v11H.5z" fill="#e9f1fb" stroke="#6b86b3" strokeDasharray="2 1" />
            <path d="m2 2 8 8M10 2l-8 8" stroke="#4a648f" strokeWidth="1.200" />
            <path d="M4.500 4.500h3v3h-3z" fill="#e9f1fb" />
          </svg>
        </button>
      </div>
    </div>
  );
}

/* ---------- taskbar ---------- */

function StartOrb() {
  return (
    <svg viewBox="0 0 28 28" className="size-[28px]">
      <defs>
        <radialGradient id="start" cx=".5" cy=".9" r=".9">
          <stop offset="0" stopColor="#6fe0f5" />
          <stop offset=".5" stopColor="#2a7fb0" />
          <stop offset="1" stopColor="#2c5270" />
        </radialGradient>
      </defs>
      <circle cx="14" cy="14" r="13.300" fill="url(#start)" stroke="#3e5c70" />
      <path d="M2 12a12 11 0 0 1 24 0c-7 2.500-17 2.500-24 0z" fill="#fff" opacity=".35" />
      <path d="M7.500 8c2-1.200 4-1 6 0l-1 5.500c-2-1-4-1-6 .2z" fill="#f0612d" />
      <path d="M14.500 8.500c2 1 4 1.200 6.500 0l-1 5.500c-2 1-4.500 1-6.500 0z" fill="#8dc63f" />
      <path d="M6.200 14.800c2-1.200 4-1.200 6-.1l-1 5.500c-2-1-4-1-6 .2z" fill="#38a5e4" />
      <path d="M13.200 15.200c2 1 4 1 6.500 0l-1.100 5.500c-2 1-4.300 1-6.400 0z" fill="#fdc82f" />
    </svg>
  );
}

const TASKS: { name: string; open?: boolean; icon: ReactNode }[] = [
  {
    name: "Firefox",
    open: true,
    icon: (
      <svg viewBox="0 0 24 24" className="size-[24px]">
        <circle cx="12" cy="11.500" r="10" fill="#2c6db5" />
        <path d="M13 2c5 0 8 4 8 8-3-4-7-3-9-6z" fill="#5fb0e5" />
        <path d="M1.500 4c.5 1 1 1.500 1.500 2 1.500-1 3-1 5-.5L11 4c-.5 2 .5 3 2 3.500 0 2-2 2-3 3 0 3 3 4.500 6 3.500 2-.5 3-3 3-5.500 0-1.500 0-3-1-4 3 1 5.500 4 5.500 8.500 0 6-5 10.500-11.500 10.500S.5 19 .5 12.500C.5 9 .8 6.500 1.500 4z" fill="#e8701a" />
        <path d="M19 5.500c3 2.500 4.500 6 3.500 9.500-1 4-4.500 7.500-10 7.500 5-1.500 8-4.500 8-9 0-3-.5-5.500-1.500-8z" fill="#fbc02d" />
      </svg>
    ),
  },
  {
    name: "Thunderbird",
    icon: (
      <svg viewBox="0 0 26 26" className="size-[26px]">
        <path d="M7 3C13-1 23 2 25 10c2 9-5 15.500-12 15.500 4-2 6-6 5-10-1-5-5-8-11-7z" fill="#2767ad" />
        <path d="M11 2c6-2 12 2 13.500 8C21 6 16 4 11 4.500z" fill="#72b8e8" />
        <path d="M2 8c3-4 9-5 14-2 4 3 5 8 3 13-2 4-6 6.500-10 6C3 23 0 15 2 8z" fill="#26405f" />
        <path d="m5.500 11 9.500-1.500 2.500 9-9 1.500z" fill="#f2f1ee" />
        <path d="m5.500 11 6.500 4.500 3-6" fill="none" stroke="#a5acb8" />
        <path d="M2 17c2 3 5 4.500 9 4.500 5 0 9-3 10-7 .5 6-4 11-9.500 11S3 22 2 17z" fill="#2f78bd" />
        <path d="m4 6-3.500 4 4-.5z" fill="#e3e7ee" />
      </svg>
    ),
  },
  {
    name: "Scanner",
    icon: (
      <svg viewBox="0 0 26 26" className="size-[26px]">
        <path d="m2 13 11 10 12-9-11-6z" fill="#6fbf5f" />
        <path d="m2 13 11 10v2.500L2 16zM13 23l12-9v3l-12 8.500z" fill="#4b5550" />
        <path d="M3 3 12 1l5 12-9 3z" fill="#fff" stroke="#8c96a0" />
        <path d="M11 5h10v10H11z" fill="#e3f1fb" stroke="#6c7f92" />
        <path d="M12.500 6.500h7v6h-7z" fill="#2f86d8" />
        <path d="M5 5l5-1M6 7.500l4-1M7 10l3-1" stroke="#7aa05f" />
        <path d="m10 15 9 1-5 4z" fill="#eef7ee" />
      </svg>
    ),
  },
  {
    name: "Launcher",
    open: true,
    icon: (
      <svg viewBox="0 0 18 18" className="size-[18px]">
        <circle cx="9" cy="9" r="8.300" fill="#12127c" />
        <path d="M12.500 0 5.500 18" stroke="#f4f4f4" strokeWidth="1.500" />
        <path d="M12.500 4 9.500 11" stroke="#f4f4f4" strokeWidth="1.200" />
      </svg>
    ),
  },
  {
    name: "Detective",
    icon: (
      <svg viewBox="0 0 24 26" className="h-[26px] w-[24px]">
        <path d="M7 6c1-4 2.500-5.500 4-5 1 .3 2 .3 3.500-.5 2-.5 3 1 3.500 4.500L21 6.500C17 10 8 11 2.500 9z" fill="#23699d" />
        <path d="M7 6.500c4 1.500 7.500 1 11-.5" fill="none" stroke="#102c44" strokeWidth="1.400" />
        <path d="M6 10.500 15 10l-3.500 7.500L7.500 18z" fill="#f1f5f8" />
        <path d="M6 10.500C3 13 2.500 16 5 18M13 10.500q-1.500 5-4.500 7.500" fill="none" stroke="#3f7ba6" strokeWidth="1.500" />
        <path d="M4 17.500c3 0 4.500 1.500 5.500 3L20.500 10l-1.500 5.500L11 24q-2.500 2-4.500 0c1.500-2.500 0-4.500-2.500-6.500z" fill="#191b20" />
      </svg>
    ),
  },
  {
    name: "Command Prompt",
    icon: (
      <svg viewBox="0 0 24 20" className="h-[20px] w-[24px]">
        <path d="M.5.500h23v19H.5z" fill="#060606" stroke="#8a8a8a" />
        <path d="M1 1h22v2H1z" fill="#9a9a9a" />
        <path d="M6 6H4C3 6 3 10 4 10h2M8 7v.8M8 9.200v.8M10 5.500l3 5M15 10h5" fill="none" stroke="#e8e8e8" />
      </svg>
    ),
  },
  {
    name: "Chrome",
    icon: (
      <svg viewBox="0 0 24 24" className="size-[24px]">
        <path d="M12 6.500h10.100A11.500 11.500 0 0 1 11 23.400L17 14z" fill="#fdcd40" />
        <path d="M2 6 7.200 14.800 12 12V6.500h10.200A11.500 11.500 0 0 0 2 6z" fill="#dc4437" />
        <path d="M2 6a11.500 11.500 0 0 0 9 17.400l5-8.600-4-2.800-4.800 2.800z" fill="#1c9d59" />
        <circle cx="12" cy="12" r="5.500" fill="#f3f3f3" />
        <circle cx="12" cy="12" r="4.300" fill="#4486f4" />
      </svg>
    ),
  },
  {
    name: "Explorer",
    open: true,
    icon: (
      <svg viewBox="0 0 26 24" className="h-[24px] w-[26px]">
        <path d="M1 3h7l1.500 2H24v16H1z" fill="#eccf76" stroke="#bfa050" />
        <path d="M8 1.500h5V7H8zM15 2.500h6V7h-6z" fill="#f4f8f0" stroke="#c1b98a" />
        <path d="M10 2.500v2M17 3.500v2" stroke="#4b9a4d" strokeWidth="1.500" />
        <path d="M1 7.500h23.500l.5 14H1z" fill="#fbe9a4" stroke="#d2b560" />
        <path d="M5 23v-7q0-2 2-2h12q2 0 2 2v7h-4v-5H9v5z" fill="#8ccbec" stroke="#4e9bc8" />
      </svg>
    ),
  },
  {
    name: "Excel",
    open: true,
    icon: (
      <svg viewBox="0 0 24 24" className="size-[24px]">
        <path d="M1 22V6q0-5 5-5h15v4" fill="none" stroke="#5c9e4e" strokeWidth="1.400" />
        <path d="M5 4h18v19H2.500V7z" fill="#f2f8ee" stroke="#86b679" />
        <path d="M12 13h4v2.500h-4zM17.500 13h4v2.500h-4zM12 17h4v2.500h-4zM17.500 17h4v2.500h-4zM5 17h5.500v2.500H5zM17.500 9h4v2.500h-4z" fill="#5aa648" />
        <path d="m5.500 6 7.500 9M13 6l-8 9" stroke="#1f6b24" strokeWidth="2.600" />
      </svg>
    ),
  },
  {
    name: "PowerPoint",
    open: true,
    icon: (
      <svg viewBox="0 0 24 24" className="size-[24px]">
        <path d="M1 22V6q0-5 5-5h15v4" fill="none" stroke="#d9663a" strokeWidth="1.400" />
        <path d="M5 4h18v19H2.500V7z" fill="#fdf3ee" stroke="#e09a7c" />
        <path d="M6 9h16v11H6z" fill="#dc4f22" />
        <path d="M8 12h4M8 14.500h4M8 17h4" stroke="#fff" strokeWidth="1.300" />
        <circle cx="17" cy="14.500" r="3.200" fill="none" stroke="#fff" strokeWidth="1.400" />
        <path d="M17 14.500V11" stroke="#fff" />
      </svg>
    ),
  },
];

const TRAY: { name: string; icon: ReactNode }[] = [
  {
    name: "Network",
    icon: <path d="M2 1.500h9v7H4v2h7M.5 3.500v8h3M5 3.500h4v3H5z" />,
  },
  {
    name: "Get Windows",
    icon: <path d="M0 2 5 1v4.500H0zM6 1l6-1v5.500H6zM0 6.500h5V11L0 10zM6 6.500h6V12l-6-1z" fill="#fff" strokeWidth=".4" />,
  },
  {
    name: "Action Center",
    icon: <path d="M1.500 0v12M1.500 1.500h4.500l1 1.500h4.500L9.500 7H6L5 6H1.500z" fill="#e6e6e6" />,
  },
  {
    name: "Power",
    icon: <path d="M1.500 2h6v9.500h-6zM3.500.500h2V2M7 4.500h4.500v3L10 9.500H8.500L7 7.500zM8 2v2.500M10.500 2v2.500" fill="#9a9a9a" />,
  },
  {
    name: "Volume",
    icon: <path d="M.5 4h2.500l3-3v10l-3-3H.5zM8 4q1.500 2 0 4M9.500 2q3 4 0 8" fill="#ddd" />,
  },
];

function Taskbar() {
  return (
    <footer className="flex h-[31px] shrink-0 items-center bg-[linear-gradient(to_right,#aeaeae,#b8b8b8_5%,#e4e4e4_12%,#e9e9e9_70%,#a8a8a8_82%,#a4a4a4)]">
      <button aria-label="Start" className="flex w-[42px] shrink-0 justify-center">
        <StartOrb />
      </button>
      <div className="ml-[4px] flex h-full w-[482px] gap-[2px] pt-[1px]">
        {TASKS.map(({ name, open, icon }) => (
          <button
            key={name}
            aria-label={name}
            className={clsx(
              "flex h-full flex-1 items-center justify-center rounded-[2px]",
              open && "border border-[#868686] bg-linear-to-br from-[#f6f6f6] to-[#e2e2e2] shadow-[inset_0_0_0_1px_#fbfbfb]",
            )}
          >
            {icon}
          </button>
        ))}
      </div>
      <div className="ml-auto flex items-center gap-[7px] pr-[12px]">
        <button aria-label="Show hidden icons" className="mr-[3px]">
          <svg viewBox="0 0 7 4" className="h-[4px] w-[7px]"><path d="M.5 3.500h6L3.500.500z" fill="#fff" stroke="#777" /></svg>
        </button>
        {TRAY.map(({ name, icon }) => (
          <button key={name} aria-label={name}>
            <svg viewBox="0 0 12 12" className="size-[12px] overflow-visible drop-shadow-[0_0_1px_#333]" fill="none" stroke="#fff">
              {icon}
            </svg>
          </button>
        ))}
      </div>
      <div className="w-[42px] text-center text-[9px] leading-[13px] whitespace-nowrap text-white">
        <p>10:30 AM</p>
        <p>11/5/2015</p>
      </div>
      <button aria-label="Show desktop" className="ml-[7px] h-full w-[11px] border-l border-[#808080] bg-linear-to-b from-[#cfcfcf] to-[#9a9a9a]" />
    </footer>
  );
}

export default function App() {
  return (
    <div className="relative flex h-screen flex-col overflow-hidden bg-[#bfdbff] font-['Open_Sans','Noto_Sans',sans-serif]">
      <OfficeOrb />
      <TitleBar />
      <TabRow />
      <div className="flex h-[72px] shrink-0 gap-[2px] border-t border-b-[3px] border-t-[#a5c3ea] border-b-[#b5d8f3] bg-linear-to-b from-[#dde9f7] via-[#cfe0f2] to-[#e4f5ff] px-[2px]">
        <ClipboardGroup />
        <SlidesGroup />
        <FontGroup />
        <ParagraphGroup />
        <DrawingGroup />
        <EditingGroup />
      </div>
      <div className="flex min-h-0 flex-1">
        <SlidePanel />
        <Workspace />
      </div>
      <StatusBar />
      <Taskbar />
    </div>
  );
}
